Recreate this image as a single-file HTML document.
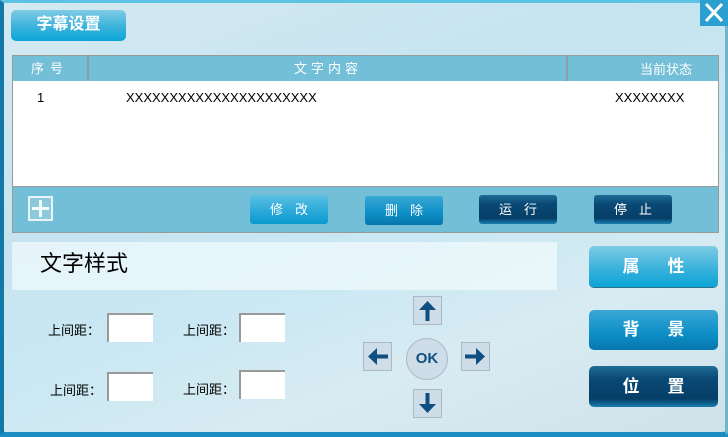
<!DOCTYPE html>
<html><head><meta charset="utf-8"><style>
*{margin:0;padding:0;box-sizing:border-box}
body{width:728px;height:437px;overflow:hidden;font-family:"Liberation Sans","Noto Sans CJK SC",sans-serif;position:relative;background:#1a8fc0}
.win{position:absolute;left:0;top:0;width:728px;height:437px;border-left:4px solid #1378a8;border-bottom:5px solid #1a8ec0;border-top:3px solid #5cc4e2;border-right:3px solid #6fb5cc;border-radius:0 0 6px 6px;background:linear-gradient(160deg,#d4e9f1 0%,#c6e4ef 35%,#c9e8f3 55%,#d8ebf2 75%,#cfe1e9 100%)}
.abs{position:absolute}
.btnL{background:linear-gradient(#7fcbe4,#3ab2dc 55%,#0aa5d6);color:#fff;border-radius:4px;text-align:center;font-weight:bold}
.btnM{background:linear-gradient(#3aa8d4,#0d8ec7 60%,#0876ad);color:#fff;border-radius:3px;text-align:center}
.btnD{background:linear-gradient(#1e6d96,#0a4a75 30%,#053e66 80%,#1a7fb0);color:#fff;border-radius:3px;text-align:center}
.arr{background:#cfdde9;border:1px solid #a9b9c8;width:29px;height:29px}
.inp{background:#fff;border-top:2px solid #999;border-left:2px solid #999;width:46px;height:29px}
.lbl{font-size:13px;color:#000}
</style></head><body>
<div class="win"></div>
<div class="abs btnL" style="left:11px;top:10px;width:115px;height:31px;line-height:30px;font-size:16px;border-radius:5px">字幕设置</div>
<div class="abs" style="left:700px;top:0;width:28px;height:26px;background:#2b9fd0"><svg width="28" height="26"><path d="M6 4L22 21M22 4L6 21" stroke="#fff" stroke-width="3"/></svg></div>
<div class="abs" style="left:12px;top:55px;width:707px;height:178px;border:1px solid #9a9a9a;background:#fff"></div>
<div class="abs" style="left:13px;top:56px;width:705px;height:25px;background:#74bfd8;color:#fff;font-size:13px">
<div class="abs" style="left:0;width:74px;text-align:center;line-height:26px;letter-spacing:6px">序号</div>
<div class="abs" style="left:74px;top:0;width:2px;height:25px;background:#8e9ea5"></div>
<div class="abs" style="left:76px;width:478px;text-align:center;line-height:26px;letter-spacing:4px">文字内容</div>
<div class="abs" style="left:553px;top:0;width:2px;height:25px;background:#8e9ea5"></div>
<div class="abs" style="left:555px;width:150px;text-align:right;padding-right:26px;line-height:28px;font-size:13px">当前状态</div>
</div>
<div class="abs" style="left:37px;top:90px;font-size:13px">1</div>
<div class="abs" style="left:126px;top:90px;font-size:13px">XXXXXXXXXXXXXXXXXXXXXX</div>
<div class="abs" style="left:615px;top:90px;font-size:13px">XXXXXXXX</div>
<div class="abs" style="left:13px;top:186px;width:705px;height:46px;background:#74bfd8;border-top:1px solid #9a9a9a"></div>
<div class="abs" style="left:28px;top:196px;width:25px;height:25px;border:2px solid #e8f4f8;background:#8cc9dd"><svg width="21" height="21"><path d="M10.5 2V19M2 10.5H19" stroke="#f4fbfd" stroke-width="3"/></svg></div>
<div class="abs btnM" style="left:250px;top:195px;width:78px;height:29px;line-height:29px;font-size:13px;letter-spacing:12px;padding-left:12px;background:linear-gradient(#5cc0e2,#27a8d8 60%,#0a9ad0)">修改</div>
<div class="abs btnM" style="left:365px;top:196px;width:78px;height:29px;line-height:29px;font-size:13px;letter-spacing:12px;padding-left:12px">删除</div>
<div class="abs btnD" style="left:479px;top:195px;width:78px;height:29px;line-height:29px;font-size:13px;letter-spacing:12px;padding-left:12px">运行</div>
<div class="abs btnD" style="left:594px;top:195px;width:78px;height:29px;line-height:29px;font-size:13px;letter-spacing:12px;padding-left:12px">停止</div>
<div class="abs" style="left:12px;top:242px;width:545px;height:48px;background:rgba(240,249,252,0.75)"></div>
<div class="abs" style="left:40px;top:246px;font-size:22px;color:#000">文字样式</div>
<div class="abs btnL" style="left:589px;top:246px;width:129px;height:41px;line-height:41px;font-size:17px;letter-spacing:28px;padding-left:28px;border-radius:5px;box-shadow:0 1px 0 #2a6f8f">属性</div>
<div class="abs btnM" style="left:589px;top:310px;width:129px;height:40px;line-height:40px;font-size:17px;font-weight:bold;letter-spacing:28px;padding-left:28px;border-radius:5px">背景</div>
<div class="abs btnD" style="left:589px;top:366px;width:129px;height:41px;line-height:41px;font-size:17px;font-weight:bold;letter-spacing:28px;padding-left:28px;border-radius:5px">位置</div>
<div class="abs lbl" style="left:48px;top:320px">上间距：</div>
<div class="abs inp" style="left:107px;top:313px"></div>
<div class="abs lbl" style="left:183px;top:320px">上间距：</div>
<div class="abs inp" style="left:239px;top:313px"></div>
<div class="abs lbl" style="left:50px;top:380px">上间距：</div>
<div class="abs inp" style="left:107px;top:372px"></div>
<div class="abs lbl" style="left:183px;top:379px">上间距：</div>
<div class="abs inp" style="left:239px;top:370px"></div>
<div class="abs arr" style="left:413px;top:296px"><svg width="27" height="27"><path d="M13.5 24V10" stroke="#0d4f80" stroke-width="4"/><path d="M5 13L13.5 4L22 13Z" fill="#0d4f80"/></svg></div>
<div class="abs arr" style="left:413px;top:389px"><svg width="27" height="27"><path d="M13.5 3V17" stroke="#0d4f80" stroke-width="4"/><path d="M5 14L13.5 23L22 14Z" fill="#0d4f80"/></svg></div>
<div class="abs arr" style="left:363px;top:342px"><svg width="27" height="27"><path d="M24 13.5H10" stroke="#0d4f80" stroke-width="4"/><path d="M13 5L4 13.5L13 22Z" fill="#0d4f80"/></svg></div>
<div class="abs arr" style="left:461px;top:342px"><svg width="27" height="27"><path d="M3 13.5H17" stroke="#0d4f80" stroke-width="4"/><path d="M14 5L23 13.5L14 22Z" fill="#0d4f80"/></svg></div>
<div class="abs" style="left:406px;top:338px;width:42px;height:42px;border-radius:50%;background:#cfdde9;border:1px solid #a9b9c8;text-align:center;line-height:40px;color:#0d4f80;font-weight:bold;font-size:15px">OK</div>
</body></html>
